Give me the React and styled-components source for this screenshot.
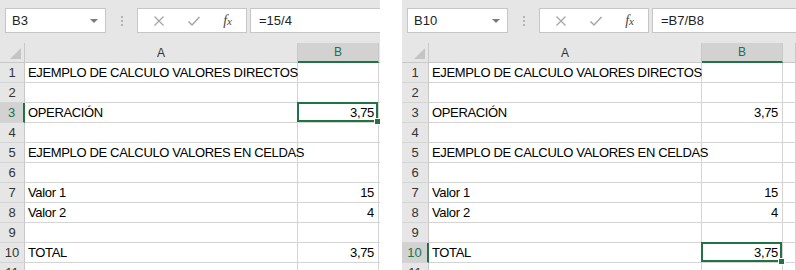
import styled, { createGlobalStyle } from "styled-components";

const Global = createGlobalStyle`
  html, body {
    margin: 0;
    padding: 0;
    background: #ffffff;
    overflow: hidden;
  }
  body {
    font-family: "Liberation Sans", Arial, sans-serif;
  }
`;

const filas = [
  { a: "EJEMPLO DE CALCULO VALORES DIRECTOS" },
  {},
  { a: "OPERACIÓN", b: "3,75" },
  {},
  { a: "EJEMPLO DE CALCULO VALORES EN CELDAS" },
  {},
  { a: "Valor 1", b: "15" },
  { a: "Valor 2", b: "4" },
  {},
  { a: "TOTAL", b: "3,75" },
  {},
];

function Cruz() {
  return (
    <svg width="12" height="12" viewBox="0 0 12 12">
      <path d="M1.5 1.5 L10.5 10.5 M10.5 1.5 L1.5 10.5" stroke="#A6A6A6" strokeWidth="1.3" fill="none" />
    </svg>
  );
}

function Check() {
  return (
    <svg width="14" height="12" viewBox="0 0 14 12">
      <path d="M1.5 6.5 L5 10 L12.5 2" stroke="#A6A6A6" strokeWidth="1.5" fill="none" />
    </svg>
  );
}

function Hoja({ celda, formula, filaSel, anchoCab, ancho }) {
  return (
    <SCPanel ancho={ancho}>
      <SCBarra>
        <SCNombre>
          <span>{celda}</span>
          <SCFlecha />
        </SCNombre>
        <SCPuntos>
          <i />
          <i />
          <i />
        </SCPuntos>
        <SCBotones>
          <Cruz />
          <Check />
          <SCFx>
            f<small>x</small>
          </SCFx>
        </SCBotones>
        <SCFormula>{formula}</SCFormula>
      </SCBarra>
      <SCGrid anchoCab={anchoCab}>
        <SCEsquina />
        <SCColCab>A</SCColCab>
        <SCColCab sel>B</SCColCab>
        <SCColCab />
        {filas.map((f, i) => {
          const n = i + 1;
          const sel = n === filaSel;
          return [
            <SCFilaCab key={"h" + n} sel={sel}>{n}</SCFilaCab>,
            <SCCelda key={"a" + n}>{f.a}</SCCelda>,
            <SCCelda key={"b" + n} num sel={sel}>
              {f.b}
              {sel && <SCAsa />}
            </SCCelda>,
            <SCCelda key={"c" + n} />,
          ];
        })}
      </SCGrid>
    </SCPanel>
  );
}

export default function App() {
  return (
    <SCPagina>
      <Global />
      <Hoja celda="B3" formula="=15/4" filaSel={3} anchoCab={25} ancho={380} />
      <Hoja celda="B10" formula="=B7/B8" filaSel={10} anchoCab={27} ancho={394} />
    </SCPagina>
  );
}

const SCPagina = styled.div`
  display: flex;
  gap: 22px;
  width: 796px;
  height: 270px;
  overflow: hidden;
`;

const SCPanel = styled.div`
  width: ${(p) => p.ancho}px;
  flex-shrink: 0;
  overflow: hidden;
  background: #ffffff;
`;

const SCBarra = styled.div`
  height: 43px;
  box-sizing: border-box;
  background: #e6e6e6;
  display: flex;
  align-items: flex-start;
  padding: 8px 0 0 5px;
`;

const SCNombre = styled.div`
  width: 101px;
  height: 25px;
  box-sizing: border-box;
  background: #ffffff;
  border: 1px solid #c6c6c6;
  display: flex;
  align-items: center;
  justify-content: space-between;
  padding: 0 7px 0 6px;
  font-size: 13px;
  color: #222;
  flex-shrink: 0;
`;

const SCFlecha = styled.span`
  width: 0;
  height: 0;
  border-left: 4px solid transparent;
  border-right: 4px solid transparent;
  border-top: 4px solid #7a7a7a;
`;

const SCPuntos = styled.div`
  width: 31px;
  height: 25px;
  display: flex;
  flex-direction: column;
  align-items: center;
  justify-content: center;
  gap: 2px;
  flex-shrink: 0;
  i {
    width: 2px;
    height: 2px;
    background: #b4b4b4;
  }
`;

const SCBotones = styled.div`
  width: 110px;
  height: 25px;
  box-sizing: border-box;
  background: #ffffff;
  border: 1px solid #c6c6c6;
  display: flex;
  align-items: center;
  justify-content: space-between;
  padding: 0 14px 0 15px;
  flex-shrink: 0;
`;

const SCFx = styled.span`
  font-family: "Liberation Serif", "Times New Roman", serif;
  font-style: italic;
  font-size: 14px;
  color: #444;
  small {
    font-size: 11px;
  }
`;

const SCFormula = styled.div`
  flex: 1;
  height: 25px;
  margin-left: 3px;
  box-sizing: border-box;
  background: #ffffff;
  border: 1px solid #c6c6c6;
  border-right: none;
  display: flex;
  align-items: center;
  padding-left: 8px;
  font-size: 13px;
  color: #222;
  white-space: nowrap;
`;

const SCGrid = styled.div`
  display: grid;
  grid-template-columns: ${(p) => p.anchoCab}px 273px 81px 1fr;
  grid-template-rows: 20px;
  grid-auto-rows: 20px;
  font-size: 13px;
  color: #000;
`;

const SCEsquina = styled.div`
  background: #e6e6e6;
  border-right: 1px solid #c8c8c8;
  border-bottom: 1px solid #c8c8c8;
  position: relative;
  box-sizing: border-box;
  &::after {
    content: "";
    position: absolute;
    right: 3px;
    bottom: 3px;
    width: 0;
    height: 0;
    border-left: 11px solid transparent;
    border-bottom: 11px solid #c4c4c4;
  }
`;

const SCColCab = styled.div`
  box-sizing: border-box;
  background: ${(p) => (p.sel ? "#d2d2d2" : "#e6e6e6")};
  color: ${(p) => (p.sel ? "#217346" : "#333")};
  border-right: 1px solid #c8c8c8;
  border-bottom: ${(p) => (p.sel ? "2px solid #217346" : "1px solid #c8c8c8")};
  display: flex;
  align-items: center;
  justify-content: center;
  font-size: 12px;
`;

const SCFilaCab = styled.div`
  box-sizing: border-box;
  background: ${(p) => (p.sel ? "#d2d2d2" : "#e6e6e6")};
  color: ${(p) => (p.sel ? "#217346" : "#333")};
  border-right: ${(p) => (p.sel ? "2px solid #217346" : "1px solid #c8c8c8")};
  border-bottom: 1px solid #d4d4d4;
  display: flex;
  align-items: center;
  justify-content: center;
  font-size: 13px;
`;

const SCCelda = styled.div`
  box-sizing: border-box;
  border-right: 1px solid #d4d4d4;
  border-bottom: 1px solid #d4d4d4;
  display: flex;
  align-items: center;
  justify-content: ${(p) => (p.num ? "flex-end" : "flex-start")};
  padding: 0 4px 0 3px;
  letter-spacing: -0.35px;
  white-space: nowrap;
  position: relative;
  overflow: visible;
  &::after {
    content: "";
    display: ${(p) => (p.sel ? "block" : "none")};
    position: absolute;
    left: -1px;
    top: -1px;
    right: 0;
    bottom: 0;
    border: 2px solid #217346;
    pointer-events: none;
  }
`;

const SCAsa = styled.span`
  position: absolute;
  right: -3px;
  bottom: -3px;
  width: 5px;
  height: 5px;
  background: #217346;
  border: 1px solid #ffffff;
  z-index: 1;
`;
